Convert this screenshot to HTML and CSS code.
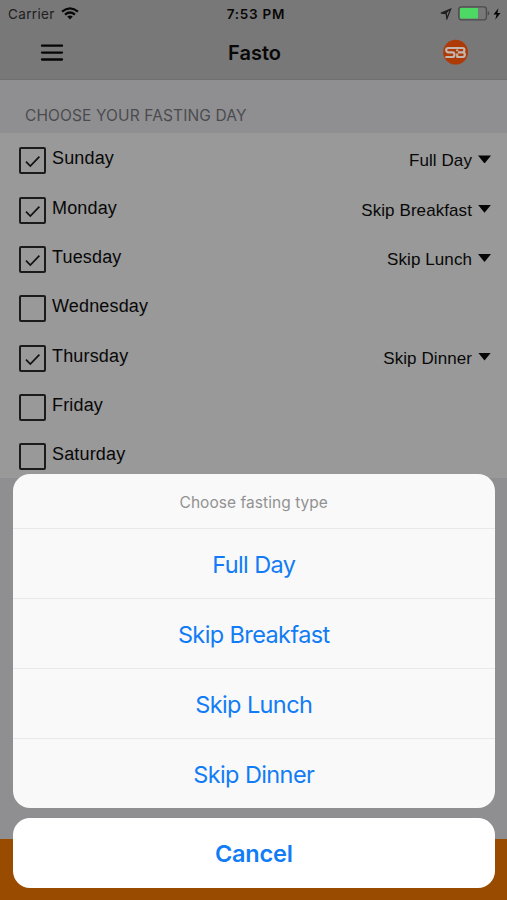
FILE: index.html
```html
<!DOCTYPE html>
<html lang="en">
<head>
<meta charset="utf-8">
<title>Fasto</title>
<link rel="stylesheet" href="styles.css">
</head>
<body>
<div class="app">
  <header class="top">
    <div class="status">
      <div class="status-left"><span class="carrier">Carrier</span>
        <svg class="wifi" width="18" height="13" viewBox="0 0 18 13" fill="none" stroke="#080808" stroke-width="2.2"><path d="M1 4.6Q9-2 17 4.6M4 7.6Q9 3.4 14 7.6"/><path d="M6.2 9.6Q9 7.4 11.8 9.6L9 12.4Z" fill="#080808" stroke="none"/></svg>
      </div>
      <span class="time">7:53 PM</span>
      <div class="status-right">
        <svg width="12" height="12" viewBox="0 0 12 12" fill="none" stroke="#202020" stroke-width="1.3"><path d="M1 5.2L10.6 1.2L6.9 10.6L6.2 5.6Z"/><path d="M1 5.2L10.6 1.2L6.2 5.6Z" fill="#202020" stroke="none"/></svg>
        <svg width="32" height="15" viewBox="0 0 32 15"><rect x=".8" y=".8" width="27.6" height="13" rx="2.5" fill="none" stroke="#4b4b4b" stroke-width="1.3"/><rect x="2" y="2" width="18" height="10.6" rx="1" fill="#4cd964"/><path d="M29.7 5v4.6q1.6-.6 1.6-2.3T29.7 5Z" fill="#4b4b4b"/></svg>
        <svg class="bolt" width="8" height="12" viewBox="0 0 8 12"><path d="M5.4.2L.5 6.5H3.6L2.2 11.8L7.5 5H4.4Z" fill="#050505"/></svg>
      </div>
    </div>
    <nav class="nav">
      <svg class="menu" width="24" height="18" viewBox="0 0 24 18" stroke="#050505" stroke-width="2.3" stroke-linecap="round"><path d="M2 1.7H22M2 8.6H22M2 15.5H22"/></svg>
      <h1>Fasto</h1>
      <svg class="logo" width="26" height="26" viewBox="0 0 26 26" fill="none"><circle cx="12.6" cy="12.2" r="12.4" fill="#ae3a08"/><path d="M12.2 8H5.2Q3.2 8 3.2 10T5.2 12.4H9.4Q11.4 12.4 11.4 14.7T9.4 17H2.4M12.2 8H19.4Q21.4 8 21.4 10T19.4 12.4H15M19.4 12.4Q21.8 12.4 21.8 14.7T19.4 17H13.4M14.2 9.6V11.2M14.2 13.6V17" stroke="#c2b6b0" stroke-width="2.2"/></svg>
    </nav>
  </header>
  <h2 class="section">CHOOSE YOUR FASTING DAY</h2>
  <main class="days">
    <div class="day"><span class="box"><svg viewBox="0 0 27 27"><path d="M7 14.7L11.3 19L20.4 9.6"/></svg></span><span class="name">Sunday</span><span class="type">Full Day</span><i class="caret"></i></div>
    <div class="day"><span class="box"><svg viewBox="0 0 27 27"><path d="M7 14.7L11.3 19L20.4 9.6"/></svg></span><span class="name">Monday</span><span class="type">Skip Breakfast</span><i class="caret"></i></div>
    <div class="day"><span class="box"><svg viewBox="0 0 27 27"><path d="M7 14.7L11.3 19L20.4 9.6"/></svg></span><span class="name">Tuesday</span><span class="type">Skip Lunch</span><i class="caret"></i></div>
    <div class="day"><span class="box"></span><span class="name">Wednesday</span></div>
    <div class="day"><span class="box"><svg viewBox="0 0 27 27"><path d="M7 14.7L11.3 19L20.4 9.6"/></svg></span><span class="name">Thursday</span><span class="type">Skip Dinner</span><i class="caret"></i></div>
    <div class="day"><span class="box"></span><span class="name">Friday</span></div>
    <div class="day"><span class="box"></span><span class="name">Saturday</span></div>
  </main>
  <footer class="bottom"></footer>
</div>
<div class="sheet">
  <div class="options">
    <div class="prompt">Choose fasting type</div>
    <div class="option">Full Day</div>
    <div class="option">Skip Breakfast</div>
    <div class="option">Skip Lunch</div>
    <div class="option">Skip Dinner</div>
  </div>
  <div class="cancel">Cancel</div>
</div>
</body>
</html>
```
FILE: styles.css
```css
* { box-sizing: border-box; }
body { margin: 0; height: 900px; overflow: hidden; position: relative; font-family: Inter, "Liberation Sans", sans-serif; color: #080808; }
.app { height: 900px; display: flex; flex-direction: column; background: #8f8f92; }
.top { height: 80px; background: #787878; border-bottom: 1px solid #707070; flex: none; }
.status { height: 27px; display: grid; grid-template-columns: 1fr auto 1fr; align-items: center; padding: 0 6px 0 8px; font-size: 13.5px; }
.status-left { display: flex; align-items: center; gap: 6px; }
.carrier { color: #202020; letter-spacing: .35px; }
.time { font-weight: 600; letter-spacing: .75px; padding-left: 3px; }
.status-right { display: flex; align-items: center; justify-content: flex-end; gap: 6px; }
.bolt { margin-left: -3px; }
.nav { height: 52px; display: grid; grid-template-columns: 1fr auto 1fr; align-items: center; padding: 0 38px 0 40px; }
.nav h1 { margin: 0; font-size: 20px; line-height: 24px; font-weight: 600; }
.logo { justify-self: end; overflow: visible; }
.section { flex: none; margin: 0; height: 53px; padding: 25px 0 0 25px; font-size: 15.5px; line-height: 21px; letter-spacing: .12px; font-weight: 400; color: #4b4b4e; }
.days { flex: none; height: 345px; display: grid; grid-template-rows: repeat(7, 1fr); background: #999; font-family: "Liberation Sans", Arial, sans-serif; }
.day { display: flex; align-items: flex-start; padding: 14.4px 15px 0 19px; }
.box { width: 27px; height: 27px; border: 2px solid #1b1b1b; border-radius: 2px; display: grid; flex: none; }
.box svg { width: 27px; height: 27px; margin: -2px; fill: none; stroke: #111; stroke-width: 1.7; }
.name { font-size: 18px; line-height: 22px; margin-left: 6px; letter-spacing: .16px; }
.type { font-size: 17px; line-height: 27px; margin-left: auto; letter-spacing: .08px; }
.caret { width: 13px; height: 8px; margin: 8px 1px 0 6px; background: #050505; clip-path: polygon(0 0, 100% 0, 50% 100%); }
.bottom { height: 61px; margin-top: auto; background: #994c00; }
.sheet { position: absolute; left: 13px; right: 12.5px; bottom: 12px; text-align: center; color: #117cf6; font-size: 23.5px; }
.options { height: 334px; background: #f9f9f9; border-radius: 17px; overflow: hidden; }
.prompt { height: 54px; line-height: 57px; color: #929292; font-size: 15.5px; letter-spacing: .05px; }
.option { height: 70px; line-height: 71px; border-top: 1px solid #e9e9eb; letter-spacing: -.6px; }
.cancel { height: 70px; margin-top: 10px; line-height: 71px; background: #fff; border-radius: 17px; font-weight: 600; letter-spacing: -.2px; }
```
